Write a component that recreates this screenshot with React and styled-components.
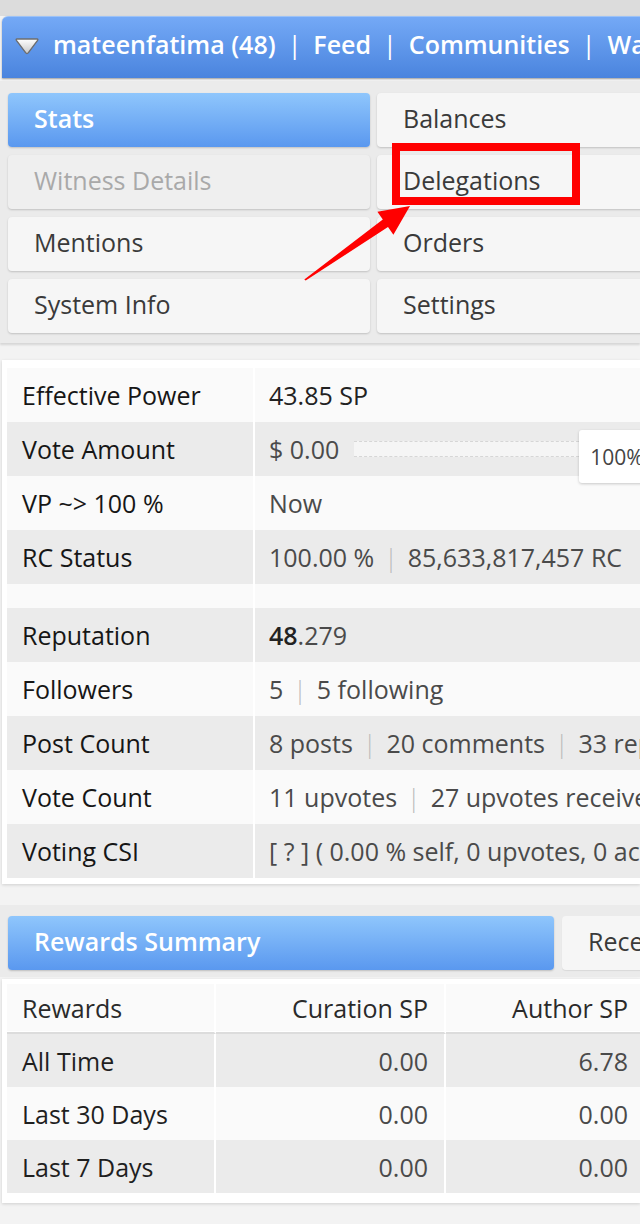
import React from 'react';
import styled, { createGlobalStyle } from 'styled-components';

const GlobalStyle = createGlobalStyle`
  html, body {
    margin: 0;
    padding: 0;
    background: #f3f3f3;
    overflow: hidden;
  }
  body {
    font-family: "Open Sans", "Noto Sans", sans-serif;
    font-size: 25px;
    color: #333;
  }
`;

const Page = styled.div`
  width: 640px;
  height: 1224px;
  overflow: hidden;
  padding-top: 16px;
  box-sizing: border-box;
  background: linear-gradient(#dcdcdc 0, #dcdcdc 16px, #f3f3f3 16px);
`;

const Header = styled.div`
  margin-left: 2px;
  width: 760px;
  height: 62px;
  border-radius: 6px 0 0 0;
  border-top: 1px solid #9cc2f7;
  box-sizing: border-box;
  background: linear-gradient(#74a9f6, #4a84de);
  box-shadow: 0 1px 2px rgba(0, 0, 0, 0.35);
  display: flex;
  align-items: center;
  padding: 0 0 7px 12px;
  color: #fff;
  font-size: 25px;
  font-weight: 600;
  white-space: nowrap;
`;

const Caret = styled.svg`
  width: 26px;
  height: 20px;
  margin-right: 13px;
  margin-top: 4px;
`;

const Pipe = styled.span`
  margin: 0 12px;
  font-weight: 400;
`;

const MenuPanel = styled.div`
  position: relative;
  margin-top: 3px;
  background: #ebebeb;
  padding: 12px 0 10px 8px;
  display: grid;
  grid-template-columns: 362px 362px;
  grid-auto-rows: 54px;
  gap: 8px 7px;
  box-shadow: 0 2px 2px rgba(0, 0, 0, 0.12);
`;

const MenuButton = styled.div`
  display: flex;
  align-items: center;
  padding-left: 26px;
  padding-bottom: 4px;
  box-sizing: border-box;
  border-radius: 4px;
  font-size: 25px;
  background: ${p => (p.$active ? 'linear-gradient(#8fc6fc, #5a98ef)' : p.$disabled ? '#efefef' : '#f6f6f6')};
  color: ${p => (p.$active ? '#fff' : p.$disabled ? '#a9a9a9' : '#3a3a3a')};
  font-weight: ${p => (p.$active ? 600 : 400)};
  box-shadow: 0 1px 2px rgba(0, 0, 0, 0.18);
`;

const Highlight = styled.div`
  position: absolute;
  left: 392px;
  top: 62px;
  width: 188px;
  height: 62px;
  box-sizing: border-box;
  border: 8px solid #ff0000;
`;

const ArrowLayer = styled.svg`
  position: absolute;
  left: 0;
  top: 0;
  width: 640px;
  height: 263px;
  pointer-events: none;
`;

const Card = styled.div`
  margin-left: 2px;
  background: #fff;
  box-shadow: 0 1px 3px rgba(0, 0, 0, 0.15);
  padding: ${p => p.$pad};
  margin-top: ${p => p.$top};
`;

const Table = styled.table`
  border-collapse: separate;
  border-spacing: 0;
  table-layout: fixed;
  width: ${p => p.$width};
`;

const Row = styled.tr`
  background: ${p => (p.$shade ? '#ebebeb' : '#fafafa')};
  height: ${p => p.$h || '54px'};
`;

const Label = styled.td`
  width: 231px;
  padding: 0 0 0 15px;
  color: #161616;
  font-weight: 500;
  border-right: 2px solid #fff;
  white-space: nowrap;
`;

const Value = styled.td`
  padding: 0 0 0 14px;
  color: #4a4a4a;
  white-space: nowrap;
`;

const Strong = styled.span`
  color: #222;
  font-weight: ${p => (p.$bold ? 600 : 400)};
`;

const Sep = styled.span`
  color: #bbb;
  margin: 0 10px;
  font-weight: 300;
`;

const VoteWrap = styled.div`
  display: flex;
  align-items: center;
  height: 54px;
`;

const Track = styled.div`
  margin-left: 15px;
  width: 225px;
  height: 14px;
  background: #f5f5f5;
  border-top: 1px dashed #d6d6d6;
  border-bottom: 1px dashed #d6d6d6;
`;

const PercentBox = styled.div`
  position: relative;
  z-index: 1;
  margin-top: 15px;
  height: 53px;
  width: 90px;
  padding-left: 11px;
  box-sizing: border-box;
  display: flex;
  align-items: center;
  background: #fff;
  border-radius: 3px;
  box-shadow: 0 1px 3px rgba(0, 0, 0, 0.2);
  font-size: 21px;
  color: #444;
`;

const TabBar = styled.div`
  margin-top: 21px;
  background: #ebebeb;
  padding: 11px 0 7px 8px;
  display: grid;
  grid-template-columns: 546px 300px;
  grid-auto-rows: 54px;
  gap: 8px;
`;

const Tab = styled(MenuButton)`
  box-shadow: ${p => (p.$active ? '0 1px 2px rgba(0,0,0,0.2)' : '0 1px 1px rgba(0,0,0,0.08)')};
`;

const HeadCell = styled.th`
  font-weight: 400;
  color: #2a2a2a;
  text-align: ${p => p.$align || 'right'};
  padding: ${p => (p.$align === 'left' ? '0 0 0 15px' : '0 16px 0 0')};
  width: ${p => p.$w};
  border-right: 2px solid #fff;
  border-bottom: 2px solid #dcdcdc;
  box-shadow: inset 0 -1px 0 #fff;
  white-space: nowrap;
`;

const NumCell = styled.td`
  text-align: ${p => p.$align || 'right'};
  padding: ${p => (p.$align === 'left' ? '0 0 0 15px' : '0 16px 0 0')};
  color: ${p => (p.$align === 'left' ? '#1f1f1f' : '#4a4a4a')};
  border-right: 2px solid #fff;
  white-space: nowrap;
`;

const stats = [
  { label: 'Effective Power', value: <Strong>43.85 SP</Strong> },
  { label: 'Vote Amount', vote: true },
  { label: 'VP ~> 100 %', value: 'Now' },
  { label: 'RC Status', value: <>100.00 %<Sep>|</Sep>85,633,817,457 RC</> },
];

const social = [
  { label: 'Reputation', value: <><Strong $bold>48</Strong>.279</> },
  { label: 'Followers', value: <>5<Sep>|</Sep>5 following</> },
  { label: 'Post Count', value: <>8 posts<Sep>|</Sep>20 comments<Sep>|</Sep>33 replies</> },
  { label: 'Vote Count', value: <>11 upvotes<Sep>|</Sep>27 upvotes received</> },
  { label: 'Voting CSI', value: '[ ? ] ( 0.00 % self, 0 upvotes, 0 accounts )' },
];

const rewards = [
  ['All Time', '0.00', '6.78'],
  ['Last 30 Days', '0.00', '0.00'],
  ['Last 7 Days', '0.00', '0.00'],
];

const App = () => {
  return (
    <Page>
      <GlobalStyle />
      <Header>
        <Caret viewBox="0 0 26 20">
          <defs>
            <linearGradient id="cg" x1="0" y1="0" x2="0" y2="1">
              <stop offset="0" stopColor="#ffffff" />
              <stop offset="1" stopColor="#c9c9c9" />
            </linearGradient>
          </defs>
          <path d="M3 3 Q1.5 3 2.6 4.6 L11.6 16.6 Q13 18.3 14.4 16.6 L23.4 4.6 Q24.5 3 23 3 Z" fill="url(#cg)" stroke="#6d6d6d" strokeWidth="1.4" strokeLinejoin="round" />
        </Caret>
        mateenfatima (48)<Pipe>|</Pipe>Feed<Pipe>|</Pipe>Communities<Pipe>|</Pipe>Wallet
      </Header>

      <MenuPanel>
        <MenuButton $active>Stats</MenuButton>
        <MenuButton>Balances</MenuButton>
        <MenuButton $disabled>Witness Details</MenuButton>
        <MenuButton>Delegations</MenuButton>
        <MenuButton>Mentions</MenuButton>
        <MenuButton>Orders</MenuButton>
        <MenuButton>System Info</MenuButton>
        <MenuButton>Settings</MenuButton>
        <Highlight />
        <ArrowLayer viewBox="0 0 640 263">
          <polygon
            points="304.3,198.4 382.8,138.6 377.4,130.8 410,125 393.4,153.8 388,146 305.7,199.6"
            fill="#ff0000"
          />
        </ArrowLayer>
      </MenuPanel>

      <Card $top="17px" $pad="8px 0 6px 5px">
        <Table $width="760px">
          <tbody>
            {stats.map((s, i) => (
              <Row key={s.label} $shade={i % 2 === 1}>
                <Label>{s.label}</Label>
                <Value>
                  {s.vote ? (
                    <VoteWrap>
                      $ 0.00
                      <Track />
                      <PercentBox>100%</PercentBox>
                    </VoteWrap>
                  ) : (
                    s.value
                  )}
                </Value>
              </Row>
            ))}
            <Row $h="24px">
              <Label />
              <Value />
            </Row>
            {social.map((s, i) => (
              <Row key={s.label} $shade={i % 2 === 0}>
                <Label>{s.label}</Label>
                <Value>{s.value}</Value>
              </Row>
            ))}
          </tbody>
        </Table>
      </Card>

      <TabBar>
        <Tab $active>Rewards Summary</Tab>
        <Tab>Recent Rewards</Tab>
      </TabBar>

      <Card $top="2px" $pad="5px 0 10px 5px">
        <Table $width="860px">
          <thead>
            <Row $h="50px">
              <HeadCell $align="left" $w="192px">Rewards</HeadCell>
              <HeadCell $w="212px">Curation SP</HeadCell>
              <HeadCell $w="182px">Author SP</HeadCell>
              <HeadCell>STEEM</HeadCell>
            </Row>
          </thead>
          <tbody>
            {rewards.map((r, i) => (
              <Row key={r[0]} $h="53px" $shade={i % 2 === 0}>
                <NumCell $align="left">{r[0]}</NumCell>
                <NumCell>{r[1]}</NumCell>
                <NumCell>{r[2]}</NumCell>
                <NumCell>0.00</NumCell>
              </Row>
            ))}
          </tbody>
        </Table>
      </Card>
    </Page>
  );
};

export default App;
